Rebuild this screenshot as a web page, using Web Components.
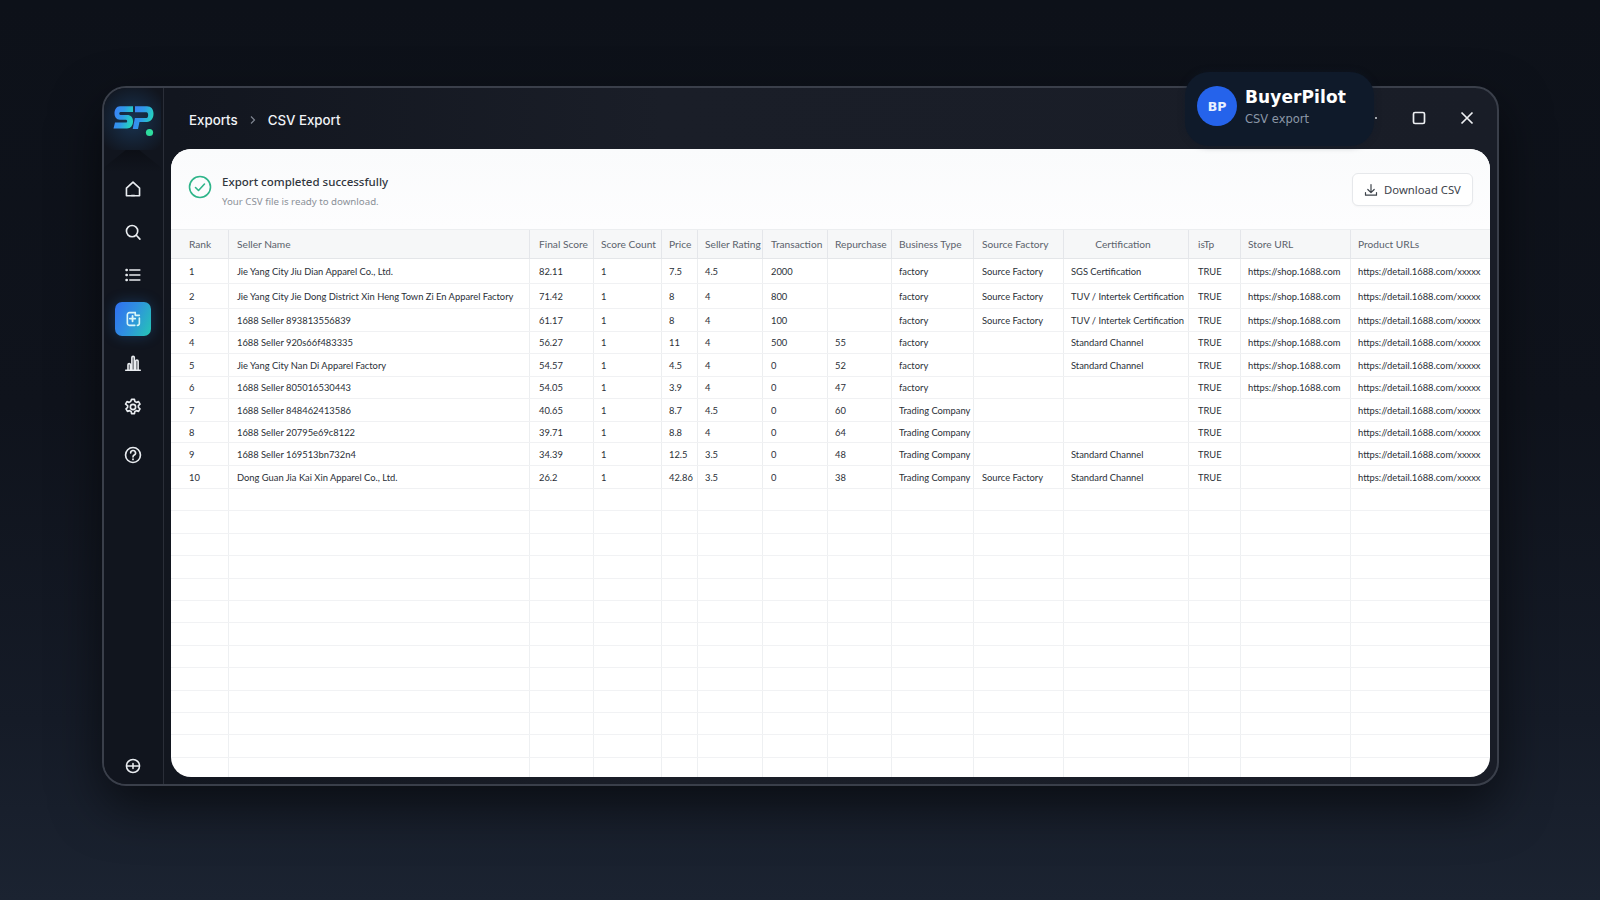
<!doctype html>
<html><head><meta charset="utf-8"><style>
html,body{margin:0;padding:0;width:1600px;height:900px;overflow:hidden}
body{background:linear-gradient(180deg,#0d1119 0%,#0f131c 45%,#151b27 80%,#1b2331 100%);font-family:"Inter","Liberation Sans",sans-serif}
</style></head><body>
<app-window>
 <side-bar slot="side"></side-bar>
 <title-bar slot="title"></title-bar>
 <export-card slot="card"></export-card>
 <brand-pill slot="pill"></brand-pill>
</app-window>
<script>
const ic={
home:'<path d="M11 3.400 3.800 10v8.400h14.400V10Z"/><path d="M9.400 18.200h3.200" />',
search:'<circle cx="10" cy="10" r="6.200"/><path d="m14.600 14.600 4 4.200"/>',
list:'<path d="M7.500 5.500h11M7.500 11h11M7.500 16.500h11"/><path d="M3.800 5.500h.4M3.800 11h.4M3.800 16.500h.4" stroke-width="2.600"/>',
exp:'<path d="M13.500 4H7a2.200 2.200 0 0 0-2.200 2.200v9.600A2.200 2.200 0 0 0 7 18h6"/><path d="M18 10v5.800a2.200 2.200 0 0 1-2.200 2.200"/><path d="M10.500 7.500v6M7.500 10.500h6" stroke-width="2"/><path d="M13.500 4v3H18"/>',
chart:'<path d="M3 19h16"/><path d="M5.500 19v-6a1.300 1.300 0 0 1 2.600 0v6M9.800 19V5a1.300 1.300 0 0 1 2.600 0v14M14 19V9a1.300 1.300 0 0 1 2.600 0v10"/>',
gear:'<circle cx="11" cy="11" r="2.900"/><path d="M9.400 2.600h3.200l.5 2.400 1.700.9 2.300-.8 1.600 2.800-1.800 1.600v1.900l1.800 1.600-1.600 2.800-2.300-.8-1.700.9-.5 2.400H9.400l-.5-2.400-1.700-.9-2.300.8-1.600-2.800 1.800-1.600V9.500L2.800 7.900l1.600-2.800 2.300.8 1.700-.9z"/>',
help:'<circle cx="11" cy="11" r="8.200"/><path d="M8.400 8.800a2.700 2.700 0 1 1 4 2.300c-.9.5-1.400 1-1.400 2"/><path d="M11 15.600v.3" stroke-width="2"/>',
plus:'<circle cx="11" cy="11" r="8"/><path d="M3.500 11h15M11 8v6"/>'
};
const svg=(n,s=20,w=1.800)=>`<svg width="${s}" height="${s}" viewBox="0 0 22 22" fill="none" stroke="currentColor" stroke-width="${w}" stroke-linecap="round" stroke-linejoin="round">${ic[n]}</svg>`;

customElements.define('app-window',class extends HTMLElement{constructor(){super();this.attachShadow({mode:'open'}).innerHTML=`<style>
:host{display:block;position:relative;box-sizing:border-box;width:1397px;height:700px;margin:86px 0 0 102px;border-radius:24px;border:2px solid #3a3f4a;background:linear-gradient(90deg,#12161f 0,#12161f 5%,#1a1e28 40%,#191d27 100%);box-shadow:0 20px 50px rgba(0,0,0,.55)}
.g{display:grid;grid-template-columns:60px 1fr;height:100%;border-radius:22px;overflow:hidden}
.m{display:flex;flex-direction:column;min-width:0}
.c{flex:1;min-height:0;padding:0 7px 7px 7px;display:flex}
</style><div class="g"><slot name="side"></slot><div class="m"><slot name="title"></slot><div class="c"><slot name="card"></slot></div></div></div><slot name="pill"></slot>`}});

customElements.define('side-bar',class extends HTMLElement{constructor(){super();this.attachShadow({mode:'open'}).innerHTML=`<style>
:host{display:flex;flex-direction:column;align-items:center;box-sizing:border-box;height:100%;background:#11151e;border-right:1px solid #2a2e38;color:#e9ecf0;position:relative;padding-right:2px}
.logo{height:62px;width:100%;display:flex;align-items:flex-start;justify-content:center;padding-top:17px;box-sizing:border-box;background:radial-gradient(circle at 50% 32px,rgba(40,110,180,.34),rgba(20,30,50,0) 38px)}
.tab{width:100%;height:22px;flex:none;position:relative}
.tab:before{content:"";position:absolute;left:0;right:0;top:0;bottom:0;background:linear-gradient(180deg,#0c0f16,#11151e);clip-path:polygon(38% 0,62% 0,100% 80%,100% 100%,0 100%,0 80%)}
.nav{display:flex;flex-direction:column;align-items:center;gap:9px;flex:1;width:100%;padding-bottom:1px;box-sizing:border-box}
.i{width:36px;height:34px;display:flex;align-items:center;justify-content:center;flex:none}
.on{background:linear-gradient(115deg,#2f6ff0 0%,#2f8fe0 45%,#25c6b4 100%);border-radius:7px;box-shadow:0 0 14px rgba(40,130,220,.3);color:#d9f6f8}
.a{margin-top:1px}.b{margin-top:1px}.c{margin-top:5px}.end{margin-top:auto}
</style>
<div class="logo"><svg width="46" height="36" viewBox="0 0 46 36"><defs><linearGradient id="lg" x1="0" x2="1" y1="0" y2=".3"><stop offset="0" stop-color="#3f7dfa"/><stop offset=".55" stop-color="#2f9ae8"/><stop offset="1" stop-color="#25d0c0"/></linearGradient></defs>
<g transform="scale(1 1.170)"><path fill="url(#lg)" d="M10 1h13v5H10.500c-1.600 0-1.600 2.500 0 2.500H17c4 0 6 2.300 6 5.500s-2.200 6-6 6H3.500l1.500-5h11c1.600 0 1.600-2.500 0-2.500h-6C6.200 12.500 4.500 10 4.500 7S6.500 1 10 1Z"/>
<path fill="url(#lg)" d="M25 1h12c4.200 0 6.500 2.600 6.500 6.500s-2.500 7-6.700 7H29.500l-1.500 6h-5.300l1-4.300 1.200-5h11.600c2.200 0 2.300-5 0-5H25Z"/></g>
<circle cx="39.500" cy="27.500" r="3.600" fill="#2edc9e"/></svg></div>
<div class="tab"></div>
<div class="nav">
 <div class="i">${svg('home')}</div><div class="i">${svg('search')}</div><div class="i">${svg('list')}</div>
 <div class="i on a">${svg('exp')}</div><div class="i a">${svg('chart')}</div><div class="i b">${svg('gear')}</div><div class="i c">${svg('help')}</div>
 <div class="i end">${svg('plus',18,1.900)}</div>
</div>`}});

customElements.define('title-bar',class extends HTMLElement{constructor(){super();this.attachShadow({mode:'open'}).innerHTML=`<style>
:host{display:flex;align-items:center;height:61px;flex:none;padding:2px 0 0 25px;box-sizing:border-box;color:#f1f3f6;font:500 13.300px "Inter","Liberation Sans",sans-serif;position:relative;z-index:2}
.s{margin:0 10px;display:flex}
.sp{flex:1}
.w{display:flex;align-items:center;gap:0;padding-right:22px;margin-top:-3px}
.dot{width:2px;height:2px;background:#cfd4da;border-radius:50%;margin-right:34px}
.max{display:flex;margin-right:32px}.x{display:flex}
</style><span>Exports</span><span class="s"><svg width="10" height="10" viewBox="0 0 10 10" fill="none" stroke="#7f8591" stroke-width="1.200"><path d="m3 1.500 3.500 3.500L3 8.500"/></svg></span><span>CSV Export</span><span class="sp"></span>
<div class="w"><span class="dot"></span><span class="max"><svg width="16" height="16" viewBox="0 0 16 16" fill="none" stroke="#eef0f3" stroke-width="1.700"><rect x="2.500" y="2.500" width="11" height="11" rx="1.500"/></svg></span><span class="x"><svg width="16" height="16" viewBox="0 0 16 16" fill="none" stroke="#eef0f3" stroke-width="1.700"><path d="m2.500 2.500 11 11M13.500 2.500l-11 11"/></svg></span></div>`}});

customElements.define('brand-pill',class extends HTMLElement{constructor(){super();this.attachShadow({mode:'open'}).innerHTML=`<style>
:host{position:absolute;right:123px;top:-16px;width:189px;height:74px;box-sizing:border-box;border-radius:24px;background:#0f1a2a;display:flex;align-items:center;gap:8px;padding-left:12px;font-family:"DejaVu Sans",sans-serif;box-shadow:0 0 6px rgba(15,26,42,.5)}
.av{width:40px;height:40px;border-radius:50%;background:#2563eb;color:#eaf1ff;font:700 12.500px "DejaVu Sans",sans-serif;display:flex;align-items:center;justify-content:center;flex:none;margin-top:-6px}
.t{display:flex;flex-direction:column;gap:3px;margin-top:-6px}
b{font-size:17px;line-height:22px;color:#fff;letter-spacing:.1px}
span{font-size:11.500px;line-height:16px;color:#8b97a7}
</style><div class="av">BP</div><div class="t"><b>BuyerPilot</b><span>CSV export</span></div>`}});

const cols=[58,301,64,68,36,65,65,64,82,90,125,52,110,140];
const heads=['Rank','Seller Name','Final Score','Score Count','Price','Seller Rating','Transaction','Repurchase','Business Type','Source Factory','Certification','isTp','Store URL','Product URLs'];
const S='https://shop.1688.com',P='https://detail.1688.com/xxxxx',F='Source Factory',T='Trading Company',f='factory',G='SGS Certification',U='TUV / Intertek Certification',C='Standard Channel';
const rows=[
[25,'1','Jie Yang City Jiu Dian Apparel Co., Ltd.','82.11','1','7.5','4.5','2000','',f,F,G,'TRUE',S,P],
[25,'2','Jie Yang City Jie Dong District Xin Heng Town Zi En Apparel Factory','71.42','1','8','4','800','',f,F,U,'TRUE',S,P],
[23,'3','1688 Seller 893813556839','61.17','1','8','4','100','',f,F,U,'TRUE',S,P],
[22,'4','1688 Seller 920s66f483335','56.27','1','11','4','500','55',f,'',C,'TRUE',S,P],
[23,'5','Jie Yang City Nan Di Apparel Factory','54.57','1','4.5','4','0','52',f,'',C,'TRUE',S,P],
[22,'6','1688 Seller 805016530443','54.05','1','3.9','4','0','47',f,'','','TRUE',S,P],
[23,'7','1688 Seller 848462413586','40.65','1','8.7','4.5','0','60',T,'','','TRUE','',P],
[21,'8','1688 Seller 20795e69c8122','39.71','1','8.8','4','0','64',T,'','','TRUE','',P],
[23,'9','1688 Seller 169513bn732n4','34.39','1','12.5','3.5','0','48',T,'',C,'TRUE','',P],
[23,'10','Dong Guan Jia Kai Xin Apparel Co., Ltd.','26.2','1','42.86','3.5','0','38',T,F,C,'TRUE','',P]];

customElements.define('sheet-table',class extends HTMLElement{constructor(){super();
 const tpl=cols.map(c=>c+'px').join(' ');
 const cell=(t,c='')=>`<div class="d ${c}">${t}</div>`;
 let h=`<div class="r h" style="height:30px">`+heads.map((t,i)=>cell(t,i==10?'ctr':'')).join('')+`</div>`;
 rows.forEach(r=>{h+=`<div class="r" style="height:${r[0]}px">`+r.slice(1).map(t=>cell(t)).join('')+`</div>`});
 for(let i=0;i<12;i++)h+=`<div class="r e" style="height:22.400px">`+cols.map(()=>cell('')).join('')+`</div>`;
 h+=`<div class="r e last" style="height:19px">`+cols.map(()=>cell('')).join('')+`</div>`;
 this.attachShadow({mode:'open'}).innerHTML=`<style>
 :host{display:block;flex:1;min-height:0;overflow:hidden;font:400 9.350px "Lato","Liberation Sans",sans-serif;color:#2a2f37}
 .r{display:grid;grid-template-columns:${tpl};box-sizing:border-box;border-bottom:1px solid #f0f1f3}
 .d{box-sizing:border-box;border-right:1px solid #eceef0;padding:0 0 0 7px;display:flex;align-items:center;white-space:nowrap;overflow:visible;min-width:0}
 .d:last-child{border-right:0}
 .d:first-child{padding-left:18px}
 .d:nth-child(2),.d:nth-child(7),.d:nth-child(10){padding-left:8px}
 .d:nth-child(3),.d:nth-child(12){padding-left:9px}
 .h{background:#f6f7f8;color:#5b626c;font-size:10.200px;border-top:1px solid #eceef0;border-bottom:1px solid #e4e6e9}
 .h .d{border-right-color:#e4e6ea}
 .h .ctr{justify-content:center;padding:0 6px 0 0}
 .e{border-bottom-color:#f1f2f4}
 .e .d{border-right-color:#eef0f2}
 .last{border-bottom:0}
 </style>`+h}});

customElements.define('export-card',class extends HTMLElement{constructor(){super();this.attachShadow({mode:'open'}).innerHTML=`<style>
:host{display:flex;flex-direction:column;flex:1;min-width:0;height:100%;background:#fff;border-radius:20px;overflow:hidden}
.top{height:80px;flex:none;display:flex;align-items:center;padding:0 17px 0 17px;background:linear-gradient(180deg,#fafbfc,#fdfdfe)}
.ok{display:flex;margin-right:10px;margin-top:-5px}
.tx{display:flex;flex-direction:column;gap:5px;flex:1;margin-top:3px}
.a{font:500 11.500px/16px "Noto Sans","Liberation Sans",sans-serif;color:#31363d}
.b{font:400 9.700px/13px "Noto Sans","Liberation Sans",sans-serif;color:#8b9098}
</style>
<div class="top"><span class="ok"><svg width="24" height="24" viewBox="0 0 24 24" fill="none" stroke="#2fb58a" stroke-width="1.600" stroke-linecap="round" stroke-linejoin="round"><circle cx="12" cy="12" r="10.500"/><path d="m7.500 12.500 3 3 6-6.500"/></svg></span>
<div class="tx"><div class="a">Export completed successfully</div><div class="b">Your CSV file is ready to download.</div></div><dl-button style="margin-top:1px">Download CSV</dl-button></div>
<sheet-table></sheet-table>`}});

customElements.define('dl-button',class extends HTMLElement{constructor(){super();this.attachShadow({mode:'open'}).innerHTML=`<style>
:host{display:flex;align-items:center;justify-content:center;gap:6px;box-sizing:border-box;width:121px;height:33px;border:1px solid #e6e8eb;border-radius:6px;background:#fff;color:#3d434b;font:400 11.300px "Noto Sans","Liberation Sans",sans-serif;box-shadow:0 1px 2px rgba(0,0,0,.03)}
svg{display:block}
</style><svg width="14" height="14" viewBox="0 0 14 14" fill="none" stroke="#3d434b" stroke-width="1.200" stroke-linecap="round" stroke-linejoin="round"><path d="M7 1.500v8M3.800 6.500 7 9.700l3.200-3.200M1.500 9.500v2.700h11V9.500"/></svg><slot></slot>`}});
</script></body></html>
